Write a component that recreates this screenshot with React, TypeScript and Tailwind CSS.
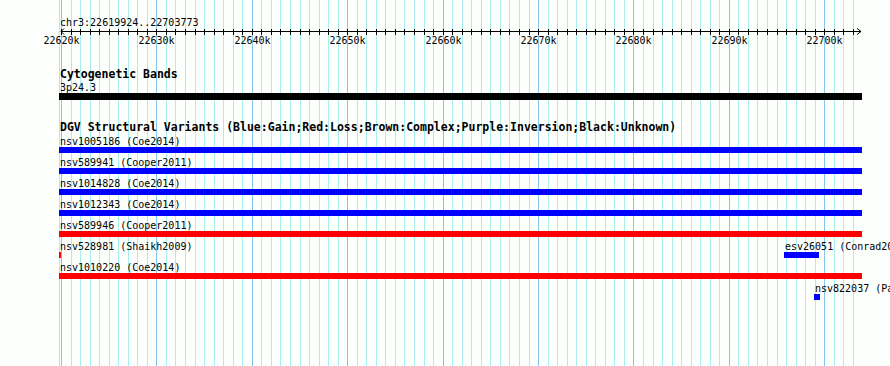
const PX0 = 61; // x of 22620k
const PPK = 9.541; // px per kb
const KB_FIRST = 22620;
const KB_LAST = 22703;

type Feature = {
  label: string;
  color: string;
  x: number;
  w: number;
};

const rows: Feature[][] = [
  [{ label: "nsv1005186 (Coe2014)", color: "bg-[#0000ff]", x: 59, w: 803 }],
  [{ label: "nsv589941 (Cooper2011)", color: "bg-[#0000ff]", x: 59, w: 803 }],
  [{ label: "nsv1014828 (Coe2014)", color: "bg-[#0000ff]", x: 59, w: 803 }],
  [{ label: "nsv1012343 (Coe2014)", color: "bg-[#0000ff]", x: 59, w: 803 }],
  [{ label: "nsv589946 (Cooper2011)", color: "bg-[#ff0000]", x: 59, w: 803 }],
  [
    { label: "nsv528981 (Shaikh2009)", color: "bg-[#ff0000]", x: 59, w: 2 },
    { label: "esv26051 (Conrad2010)", color: "bg-[#0000ff]", x: 784, w: 35 },
  ],
  [{ label: "nsv1010220 (Coe2014)", color: "bg-[#ff0000]", x: 59, w: 803 }],
  [{ label: "nsv822037 (Park2010)", color: "bg-[#0000ff]", x: 814, w: 6 }],
];

const kbs = Array.from({ length: KB_LAST - KB_FIRST + 1 }, (_, i) => i);
const kx = (i: number) => Math.round(PX0 + i * PPK) + 0.5;

function Grid() {
  return (
    <svg className="absolute inset-0" width={890} height={366} shapeRendering="crispEdges">
      <line x1={59.5} y1={0} x2={59.5} y2={366} stroke="#a8eeee" />
      {kbs.map((i) => (
        <line
          key={i}
          x1={kx(i)}
          y1={0}
          x2={kx(i)}
          y2={366}
          stroke={i % 10 === 0 ? "#84c6f0" : "#a8eeee"}
        />
      ))}
    </svg>
  );
}

function Ruler() {
  return (
    <svg width={890} height={20} className="block" shapeRendering="crispEdges">
      <line x1={61} y1={3.5} x2={861} y2={3.5} stroke="#000" />
      <polyline points="64,0.5 61,3.5 64,6.5" fill="none" stroke="#000" shapeRendering="auto" />
      <polyline points="857,0.5 861,3.5 857,6.5" fill="none" stroke="#000" shapeRendering="auto" />
      {kbs.map((i) => (
        <line key={i} x1={kx(i)} y1={1} x2={kx(i)} y2={7} stroke="#000" />
      ))}
      {kbs
        .filter((i) => i % 10 === 0)
        .map((i) => (
          <text
            key={i}
            x={kx(i)}
            y={16}
            textAnchor="middle"
            fontSize={10}
            fontFamily="'DejaVu Sans Mono', monospace"
            fill="#000"
          >
            {KB_FIRST + i}k
          </text>
        ))}
    </svg>
  );
}

function TrackRow({ features }: { features: Feature[] }) {
  return (
    <div className="relative h-[21px]">
      {features.map((f) => (
        <div key={f.label} className="absolute top-0" style={{ left: f.x }}>
          <div className="h-[11px] pl-px text-[10px] leading-[11px] whitespace-nowrap">{f.label}</div>
          <div className={`h-[6px] ${f.color}`} style={{ width: f.w }} />
        </div>
      ))}
    </div>
  );
}

export default function App() {
  return (
    <div className="relative w-[890px] h-[366px] overflow-hidden bg-[#fcfffc] text-black font-['DejaVu_Sans_Mono',monospace]">
      <Grid />
      <div className="relative flex flex-col pt-[17px]">
        <div className="h-[11px] pl-[60px] text-[10px] leading-[11px]">chr3:22619924..22703773</div>
        <Ruler />

        <div className="mt-[20px] h-[13px] pl-[60px] text-[11.5px] font-bold leading-[13px]">
          Cytogenetic Bands
        </div>
        <div className="mt-px h-[11px] pl-[60px] text-[10px] leading-[11px]">3p24.3</div>
        <div className="ml-[59px] h-[7px] w-[803px] bg-black" />

        <div className="mt-[21px] h-[13px] pl-[60px] text-[11.5px] font-bold leading-[13px] whitespace-nowrap">
          DGV Structural Variants (Blue:Gain;Red:Loss;Brown:Complex;Purple:Inversion;Black:Unknown)
        </div>
        <div className="mt-[2px]">
          {rows.map((r, i) => (
            <TrackRow key={i} features={r} />
          ))}
        </div>
      </div>
    </div>
  );
}
